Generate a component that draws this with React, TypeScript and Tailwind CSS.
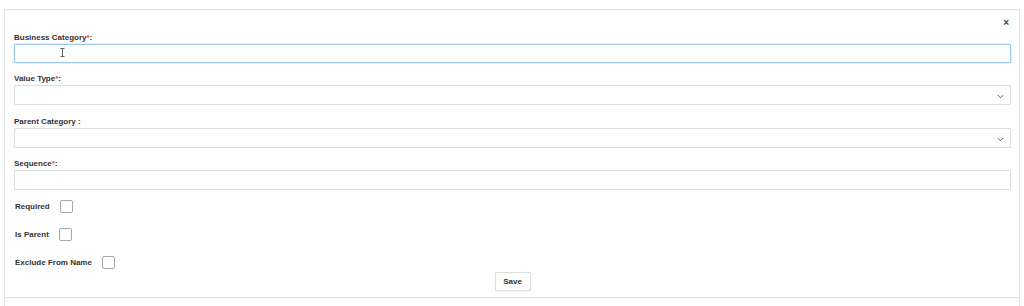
import React from "react";

const labelCls = "block text-[8px] leading-[12px] font-bold text-[#333]";
const boxCls = "h-[20px] w-full border border-[#dcdcdc] bg-white rounded-[1px]";

function Req() {
  return <span className="text-[#e03b3b]">*</span>;
}

function Chevron() {
  return (
    <svg width="7" height="5" viewBox="0 0 7 5" className="absolute right-[6px] top-[8px]">
      <path d="M0.8 1 L3.5 3.8 L6.2 1" fill="none" stroke="#666" strokeWidth="1" />
    </svg>
  );
}

function Checkbox() {
  return <span className="ml-[10px] inline-block h-[13px] w-[13px] rounded-[2px] border border-[#a8a8a8] bg-white" />;
}

export default function App() {
  return (
    <div className="h-[306px] w-[1024px] overflow-hidden bg-white pt-[9px] font-['Liberation_Sans',Arial,sans-serif]">
      <div className="relative ml-[4px] h-[320px] w-[1016px] border border-b-0 border-[#e4e4e4] pl-[9px] pr-[8px]">
        {/* header */}
        <div className="flex h-[22px] justify-end pr-[2px] pt-[8px]">
          <span className="text-[10px] leading-[10px] font-bold text-[#444]">×</span>
        </div>

        <label className={labelCls}>
          Business Category<Req />:
        </label>
        <div className="relative h-[19px] w-full rounded-[1px] border border-[#9cc8ec] bg-white shadow-[0_0_2px_rgba(102,175,233,0.6)]">
          <svg width="5" height="9" viewBox="0 0 5 9" className="absolute left-[45px] top-[3px]">
            <path d="M0.5 0.5 H4.5 M2.5 0.5 V8.5 M0.5 8.5 H4.5" stroke="#555" strokeWidth="0.9" fill="none" />
          </svg>
        </div>

        <label className={`${labelCls} mt-[10px]`}>
          Value Type<Req />:
        </label>
        <div className={`relative ${boxCls}`}>
          <Chevron />
        </div>

        <label className={`${labelCls} mt-[11px]`}>Parent Category :</label>
        <div className={`relative ${boxCls}`}>
          <Chevron />
        </div>

        <label className={`${labelCls} mt-[10px]`}>
          Sequence<Req />:
        </label>
        <div className={boxCls} />

        <div className="mt-[10px] flex flex-col gap-[15px] pl-[1px]">
          <div className="flex h-[13px] items-center">
            <span className="text-[8px] font-bold text-[#333]">Required</span>
            <Checkbox />
          </div>
          <div className="flex h-[13px] items-center">
            <span className="text-[8px] font-bold text-[#333]">Is Parent</span>
            <Checkbox />
          </div>
          <div className="flex h-[13px] items-center">
            <span className="text-[8px] font-bold text-[#333]">Exclude From Name</span>
            <Checkbox />
          </div>
        </div>

        <div className="mt-[3px] flex justify-center">
          <button className="h-[19px] w-[36px] rounded-[1px] border border-[#dcdcdc] bg-white text-[8px] font-bold text-[#333] shadow-[0_1px_1px_rgba(0,0,0,0.05)]">
            Save
          </button>
        </div>

        <div className="-ml-[9px] -mr-[8px] mt-[6px] border-t border-[#e4e4e4]" />
      </div>
    </div>
  );
}
